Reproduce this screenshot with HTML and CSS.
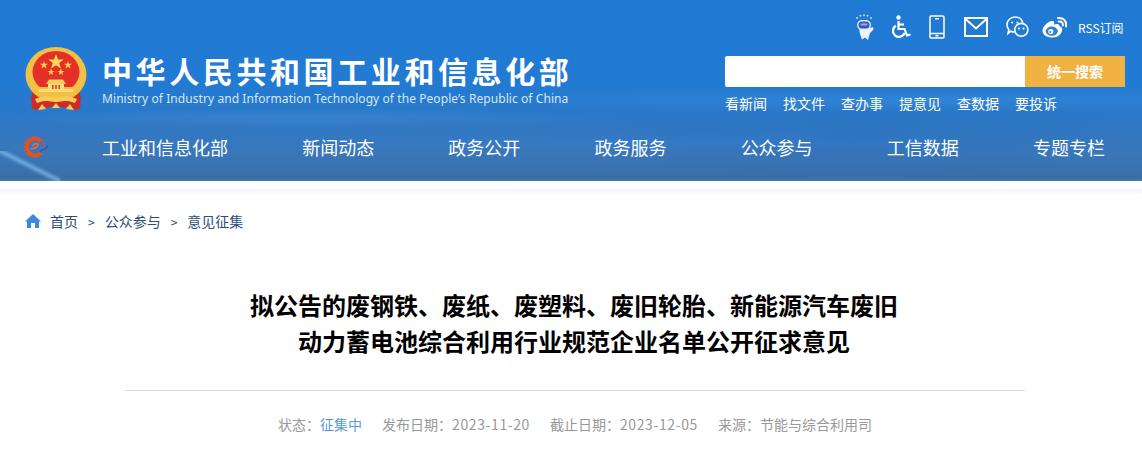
FILE: index.html
```html
<!DOCTYPE html>
<html lang="zh-CN">
<head>
  <meta charset="UTF-8">
  <title>中华人民共和国工业和信息化部</title>
  <link rel="stylesheet" href="styles.css">
</head>
<body>

<header class="header">
  <div class="top">
    <div class="brand">
      <!-- 国徽 -->
      <svg class="emblem" viewBox="0 0 62 64" width="62" height="64">
        <path d="M9 42 L6 50 L7 62 Q14 64 20 61 Q31 58 42 61 Q48 64 55 62 L56 50 L53 42 Z" fill="#cf2a2a"/>
        <ellipse cx="31" cy="27.5" rx="30.5" ry="27.5" fill="#f2c044"/>
        <ellipse cx="31" cy="25" rx="23.5" ry="21" fill="#e5302a"/>
        <path d="M7 36 Q10 46 20 51 L42 51 Q52 46 55 36 L50 40 H12 Z" fill="#f2c044"/>
        <path d="M14 42 H48 V45 H14 Z M23 37 H39 V42 H23 Z" fill="#f8dc7a"/>
        <path d="M21 37 L24 32.5 H38 L41 37 Z" fill="#f6cf58"/>
        <path d="M27 38 h1.6 v4 h-1.6 Z M30.2 38 h1.6 v4 h-1.6 Z M33.4 38 h1.6 v4 h-1.6 Z" fill="#d9432b"/>
        <polygon points="31,7 33,12.5 38.8,12.5 34.2,16 35.9,21.5 31,18.2 26.1,21.5 27.8,16 23.2,12.5 29,12.5" fill="#f9d85a"/>
        <polygon points="19,14 20,16.8 23,16.8 20.6,18.6 21.5,21.4 19,19.8 16.5,21.4 17.4,18.6 15,16.8 18,16.8" fill="#f7cf4c"/>
        <polygon points="43,14 44,16.8 47,16.8 44.6,18.6 45.5,21.4 43,19.8 40.5,21.4 41.4,18.6 39,16.8 42,16.8" fill="#f7cf4c"/>
        <polygon points="26,21.5 26.9,24 29.5,24 27.4,25.6 28.2,28 26,26.6 23.8,28 24.6,25.6 22.5,24 25.1,24" fill="#f7cf4c"/>
        <polygon points="36,21.5 36.9,24 39.5,24 37.4,25.6 38.2,28 36,26.6 33.8,28 34.6,25.6 32.5,24 35.1,24" fill="#f7cf4c"/>
        <path d="M10 52 Q20 47 31 51 Q42 47 52 52 L50 56 Q40 52 31 55 Q22 52 12 56 Z" fill="#f5cd55"/>
        <path d="M13 63 L17 57 L21 62 Z M27 61 L31 56 L35 61 Z M41 62 L45 57 L49 63 Z" fill="#f5cd55"/>
      </svg>
      <div class="brand-text">
        <div class="brand-cn">中华人民共和国工业和信息化部</div>
        <div class="brand-en">Ministry of Industry and Information Technology of the People’s Republic of China</div>
      </div>
    </div>

    <div class="tools">
      <div class="icons">
        <!-- 机器人 -->
        <svg class="ico-robot" viewBox="0 0 19 27" width="19" height="27">
          <path d="M4 14 L15 14 L18 13 L18.5 15.5 L15 19 L13 26 L10 23.5 L7 25.5 L5 20 Z" fill="#e9f3fc"/>
          <rect x="2" y="6" width="14" height="10" rx="5" fill="#dcebfa"/>
          <rect x="3.5" y="7.5" width="11" height="7" rx="3.5" fill="#3a55b5"/>
          <rect x="5.5" y="9.5" width="7" height="2" rx="1" fill="#8fb4ee"/>
          <g fill="#b9e2cf"><circle cx="2" cy="4" r="1"/><circle cx="5.5" cy="1.8" r="1"/><circle cx="9" cy="1.2" r="1"/><circle cx="12.5" cy="1.8" r="1"/><circle cx="16" cy="4" r="1"/></g>
        </svg>
        <!-- 无障碍 -->
        <svg class="ico-wheel" viewBox="0 0 19 24" width="19" height="24" fill="none" stroke="#fff" stroke-width="2.2">
          <circle cx="6.5" cy="2.5" r="2.2" fill="#fff" stroke="none"/>
          <path d="M6.5 6 V14 H12.5 L15 20.5 L18.5 19.5"/>
          <path d="M6.5 9.5 H12"/>
          <path d="M3.8 10.8 A6 6 0 1 0 12.6 18"/>
        </svg>
        <!-- 手机 -->
        <svg class="ico-phone" viewBox="0 0 16 24" width="16" height="24" fill="none" stroke="#fff" stroke-width="1.5">
          <rect x="1" y="1" width="14" height="22" rx="1"/>
          <path d="M1 18.5 H15 M6 3.8 H10"/>
          <path d="M6.5 20.8 H9.5"/>
        </svg>
        <!-- 邮箱 -->
        <svg class="ico-mail" viewBox="0 0 24 20" width="24" height="20" fill="none" stroke="#fff" stroke-width="2">
          <rect x="1" y="1" width="22" height="18"/>
          <path d="M1.5 2 L12 11.5 L22.5 2"/>
        </svg>
        <!-- 微信 -->
        <svg class="ico-wechat" viewBox="0 0 23 22" width="23" height="22" fill="none" stroke="#fff" stroke-width="1.6">
          <path d="M8.5 16 Q6.5 16 5 15.2 L2 17.5 L2.8 13.5 Q1 11.5 1 8.8 C1 4.5 4.5 1 9 1 C13 1 16.2 3.5 16.8 7"/>
          <ellipse cx="15.3" cy="13.8" rx="6.6" ry="6.4"/>
          <circle cx="6.2" cy="6.5" r="1.1" fill="#fff" stroke="none"/><circle cx="11.4" cy="6.5" r="1.1" fill="#fff" stroke="none"/>
          <circle cx="13" cy="12.5" r="1.1" fill="#fff" stroke="none"/><circle cx="17.6" cy="12.5" r="1.1" fill="#fff" stroke="none"/>
        </svg>
        <!-- 微博 -->
        <svg class="ico-weibo" viewBox="0 0 26 22" width="26" height="22">
          <path d="M10.5 21.5 C5 21.5 0.5 19 0.5 15 C0.5 11 5 6 9.5 5 C12 4.6 12.8 6.4 12 8.6 C15 7.6 17.6 8 17.6 10.2 C20 11 20.4 12.4 20.2 14 C19.6 18.5 15.6 21.5 10.5 21.5 Z" fill="#fff"/>
          <ellipse cx="9.8" cy="15.2" rx="6" ry="4.6" fill="#2a7fd0"/>
          <circle cx="8.8" cy="15.6" r="2.6" fill="#fff"/>
          <circle cx="8.2" cy="16" r="1.1" fill="#2a7fd0"/>
          <path d="M16 2 C21 1.2 25 5 24 10.4 M16.6 5.6 C19.4 5 21.4 7 20.8 9.6" fill="none" stroke="#fff" stroke-width="2" stroke-linecap="round"/>
        </svg>
        <span class="rss">RSS订阅</span>
      </div>
      <div class="search">
        <div class="search-input"></div>
        <div class="search-btn">统一搜索</div>
      </div>
      <div class="quick">
        <a>看新闻</a><a>找文件</a><a>查办事</a><a>提意见</a><a>查数据</a><a>要投诉</a>
      </div>
    </div>
  </div>

  <nav class="nav">
    <!-- 小logo -->
    <svg class="nav-logo" viewBox="0 0 26 24" width="26" height="24" fill="none">
      <circle cx="11.5" cy="12" r="10" stroke="#e8531f" stroke-width="2" stroke-dasharray="2 1.4" opacity="0.8"/>
      <path d="M18 6.5 A8.2 8.2 0 1 0 17.5 18" stroke="#ea4f1a" stroke-width="3.6"/>
      <path d="M8 13.5 C11 14 15.5 11.5 15 9.5 C13 8 10.5 9 9.5 11" stroke="#f1663a" stroke-width="1.8"/>
      <path d="M17 16 Q22 15 25 10.5" stroke="#2a5fb0" stroke-width="2"/>
    </svg>
    <ul class="nav-list">
      <li>工业和信息化部</li>
      <li>新闻动态</li>
      <li>政务公开</li>
      <li>政务服务</li>
      <li>公众参与</li>
      <li>工信数据</li>
      <li>专题专栏</li>
    </ul>
  </nav>
</header>

<div class="band"></div>

<div class="crumbs">
  <svg class="home" viewBox="0 0 16 14" width="16" height="14">
    <path d="M8 0 L16 7.4 L14 7.4 L14 14 L10 14 L10 9 L6 9 L6 14 L2 14 L2 7.4 L0 7.4 Z" fill="#3e87dc"/>
  </svg>
  <a>首页</a><span class="sep">&gt;</span><a>公众参与</a><span class="sep">&gt;</span><a>意见征集</a>
</div>

<main class="article">
  <h1>拟公告的废钢铁、废纸、废塑料、废旧轮胎、新能源汽车废旧<br>动力蓄电池综合利用行业规范企业名单公开征求意见</h1>
  <div class="meta">
    <span>状态：<em>征集中</em></span>
    <span>发布日期：<i class="num">2023-11-20</i></span>
    <span>截止日期：<i class="num">2023-12-05</i></span>
    <span>来源：节能与综合利用司</span>
  </div>
</main>

</body>
</html>
```

FILE: styles.css
```css
* {
  box-sizing: border-box;
}
body {
  margin: 0;
  background: #fff;
  font-family: "Noto Sans CJK SC", "Noto Sans", sans-serif;
  overflow: hidden;
}

/* 头部 */
.header {
  height: 181px;
  color: #fff;
  background:
    linear-gradient(to top right, transparent 42%, rgba(140,200,245,0.6) 50%, transparent 58%) 0 151px / 60px 30px no-repeat,
    radial-gradient(ellipse 420px 12px at 900px 100px, rgba(70,150,235,0.4), transparent),
    radial-gradient(ellipse 300px 10px at 300px 118px, rgba(90,150,220,0.3), transparent),
    radial-gradient(ellipse 500px 9px at 620px 142px, rgba(50,130,220,0.3), transparent),
    radial-gradient(ellipse 260px 60px at 860px 130px, rgba(40,110,190,0.35), transparent),
    linear-gradient(180deg, #2079d3 0%, #217bd3 45%, #2a79c9 62%, #3a76b8 85%, #3a6ea8 98%, #4a7aab 100%);
}
.top {
  display: flex;
  justify-content: space-between;
  padding: 14px 17px 0 25px;
  height: 125px;
}
.brand {
  display: flex;
  align-items: flex-start;
  padding-top: 33px;
}
.emblem {
  display: block;
}
.brand-text {
  margin-left: 15px;
}
.brand-cn {
  font-size: 30px;
  line-height: 40px;
  font-weight: 700;
  letter-spacing: 3.6px;
  white-space: nowrap;
  margin-top: 3px;
}
.brand-en {
  font-family: "Noto Sans", sans-serif;
  font-size: 12px;
  line-height: 18px;
  color: #d5e6f8;
  white-space: nowrap;
  letter-spacing: 0.075px;
}

.tools {
  width: 400px;
}
.icons {
  display: flex;
  align-items: center;
  height: 26px;
  padding-left: 130px;
}
.ico-wheel { margin-left: 18px; }
.ico-phone { margin-left: 18px; }
.ico-mail { margin-left: 19px; }
.ico-wechat { margin-left: 18px; }
.ico-weibo { margin-left: 13px; }
.rss {
  margin-left: 10px;
  font-size: 12px;
  white-space: nowrap;
}
.search {
  display: flex;
  height: 31px;
  margin-top: 16px;
}
.search-input {
  flex: 1;
  background: #fff;
  border-radius: 2px 0 0 2px;
}
.search-btn {
  width: 100px;
  background: #f1b244;
  color: #fff;
  font-size: 14px;
  font-weight: 700;
  line-height: 31px;
  text-align: center;
}
.quick {
  display: flex;
  gap: 16px;
  margin-top: 6px;
  font-size: 14px;
  line-height: 20px;
}

/* 导航 */
.nav {
  display: flex;
  align-items: center;
  padding: 0 37px 2px 23px;
  height: 46px;
}
.nav-logo {
  flex: none;
}
.nav-list {
  flex: 1;
  display: flex;
  justify-content: space-between;
  list-style: none;
  margin: 0 0 0 53px;
  padding: 0;
  font-size: 18px;
  line-height: 44px;
}

/* 头部下面的浅色条 */
.band {
  height: 14px;
  border-top: 8px solid #fff;
  background: linear-gradient(#f1f4f8, #fff);
}

/* 面包屑 */
.crumbs {
  display: flex;
  align-items: center;
  height: 20px;
  margin-top: 16px;
  padding-left: 25px;
  font-size: 14px;
  color: #2b4d78;
}
.home {
  margin-right: 9px;
}
.sep {
  margin: 0 10px;
  font-size: 12px;
}

/* 正文 */
.article {
  width: 900px;
  margin-left: 125px;
  padding-top: 56px;
}
.article h1 {
  margin: 0;
  padding: 0 2px 31px 0;
  border-bottom: 1px solid #ddd;
  color: #000;
  font-size: 24px;
  line-height: 36px;
  font-weight: 700;
  text-align: center;
}
.meta {
  display: flex;
  justify-content: center;
  gap: 20px;
  margin-top: 23px;
  color: #999;
  font-size: 14px;
  line-height: 20px;
}
.meta em {
  font-style: normal;
  color: #5b9ad8;
}
.meta .num {
  font-style: normal;
  letter-spacing: 0.6px;
}
```
